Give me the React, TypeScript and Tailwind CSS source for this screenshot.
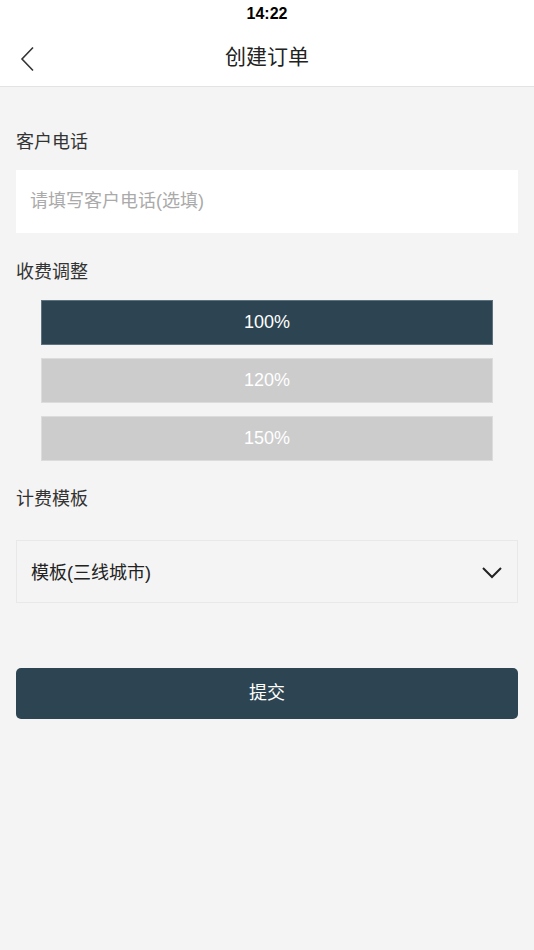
import { useState } from "react";

const font = { fontFamily: '"Liberation Sans", "Noto Sans CJK SC", sans-serif' };

const rates = ["100%", "120%", "150%"];

export default function App() {
  const [rate, setRate] = useState("100%");
  const [phone, setPhone] = useState("");

  return (
    <div className="min-h-[950px] w-[534px] bg-[#f4f4f4]" style={font}>
      {/* status bar + nav */}
      <div className="bg-white border-b border-[#e3e3e3]">
        <div className="flex h-[28px] items-center justify-center text-[16px] font-semibold text-black">
          14:22
        </div>
        <div className="relative flex h-[58px] items-center justify-center">
          <button className="absolute left-[16px] top-[14px] p-1">
            <svg width="16" height="26" viewBox="0 0 16 26" fill="none">
              <path d="M13 1.5 L2 13 L13 24.5" stroke="#333" strokeWidth="1.6" />
            </svg>
          </button>
          <h1 className="text-[21px] text-[#222]">创建订单</h1>
        </div>
      </div>

      <div className="px-4">
        <div className="mt-[43px] h-6 text-[18px] leading-6 text-[#333]">客户电话</div>
        <input
          value={phone}
          onChange={(e) => setPhone(e.target.value)}
          placeholder="请填写客户电话(选填)"
          className="mt-4 block h-[63px] w-full bg-white px-[14px] text-[18px] text-[#333] outline-none placeholder:text-[#aaaaaa]"
        />

        <div className="mt-[27px] h-6 text-[18px] leading-6 text-[#333]">收费调整</div>
        <div className="mt-4 flex flex-col gap-[13px] px-[25px]">
          {rates.map((r) => (
            <button
              key={r}
              onClick={() => setRate(r)}
              className={
                r === rate
                  ? "h-[45px] w-full border border-[#5d7280] bg-[#2d4552] text-[18px] text-white"
                  : "h-[45px] w-full border border-[#dcdcdc] bg-[#cccccc] text-[18px] text-white"
              }
            >
              {r}
            </button>
          ))}
        </div>

        <div className="mt-[26px] h-6 text-[18px] leading-6 text-[#333]">计费模板</div>
        <div className="mt-[29px] flex h-[63px] items-center justify-between border border-[#e8e8e8] pl-[14px] pr-[15px] pt-[3px]">
          <span className="text-[18px] text-[#222]">模板(三线城市)</span>
          <svg width="20" height="12" viewBox="0 0 20 12" fill="none">
            <path d="M1 1 L10 10 L19 1" stroke="#222" strokeWidth="2" />
          </svg>
        </div>

        <button className="mt-[65px] h-[51px] w-full rounded-[5px] bg-[#2d4552] text-[18px] text-white">
          提交
        </button>
      </div>
    </div>
  );
}
